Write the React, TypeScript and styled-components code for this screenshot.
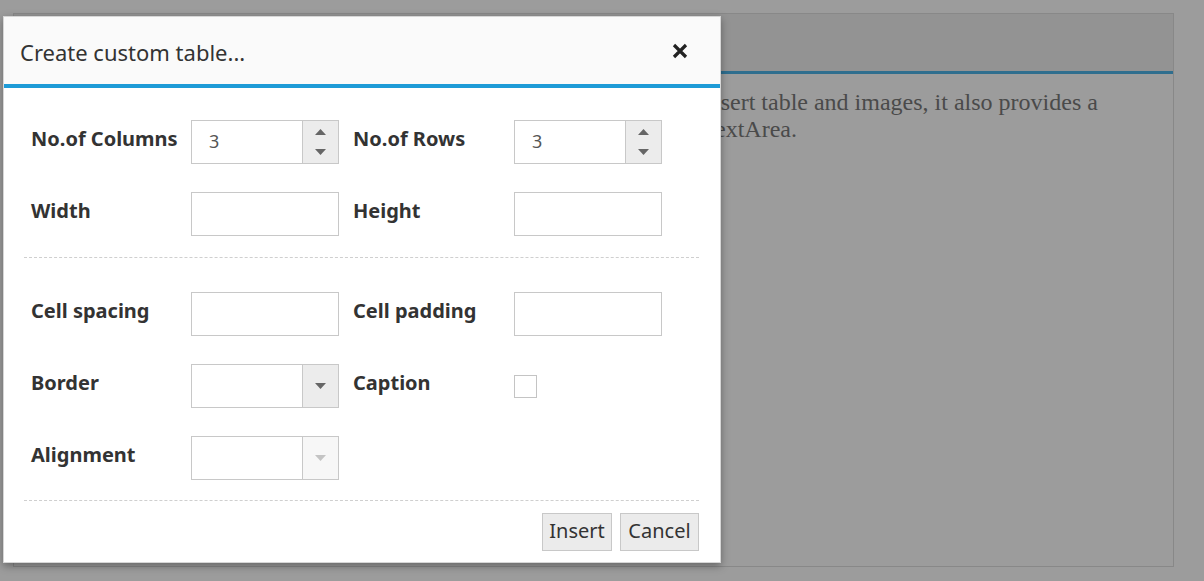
import React from 'react';
import styled, { createGlobalStyle } from 'styled-components';

const GlobalStyle = createGlobalStyle`
  html, body {
    margin: 0;
    padding: 0;
    background: #9c9c9c;
    font-family: "Segoe UI", "Noto Sans", "Open Sans", sans-serif;
  }
`;

const Page = styled.div`
  position: relative;
  width: 1204px;
  height: 581px;
  overflow: hidden;
  padding: 13px 30px 0 13px;
  box-sizing: border-box;
`;

const Editor = styled.div`
  height: 554px;
  border: 1px solid #888888;
  box-sizing: border-box;
  display: flex;
  flex-direction: column;
`;

const EditorToolbar = styled.div`
  height: 57px;
  background: #939393;
  border-bottom: 3px solid #2f6e8e;
`;

const EditorContent = styled.div`
  padding: 15px 0 0 688px;
  font-family: "Liberation Serif", serif;
  font-size: 24px;
  line-height: 27px;
  color: #4a4a4a;
`;

const Dialog = styled.div`
  position: absolute;
  left: 3px;
  top: 16px;
  width: 718px;
  height: 547px;
  box-sizing: border-box;
  background: #fff;
  border: 1px solid #d6d6d6;
  box-shadow: 0 3px 8px rgba(0, 0, 0, 0.35);
  display: flex;
  flex-direction: column;
`;

const DialogHeader = styled.div`
  height: 67px;
  background: #fafafa;
  border-bottom: 4px solid #1e9bd7;
  display: flex;
  align-items: center;
  justify-content: space-between;
  padding: 0 32px 0 16px;
`;

const Title = styled.div`
  font-size: 22px;
  color: #333;
  padding-top: 2px;
`;

const CloseButton = styled.button`
  border: none;
  background: none;
  padding: 0;
  width: 16px;
  height: 16px;
  display: flex;
  cursor: pointer;
`;

const Body = styled.div`
  padding: 32px 21px 0 20px;
`;

const FieldGrid = styled.div`
  display: grid;
  grid-template-columns: 160px 162px 161px 148px;
  grid-auto-rows: 44px;
  row-gap: 28px;
  align-items: center;
  padding-left: 7px;
`;

const Label = styled.label`
  font-size: 20px;
  font-weight: 700;
  color: #333;
  padding-bottom: 7px;
  white-space: nowrap;
`;

const Box = styled.div`
  width: 148px;
  height: 44px;
  box-sizing: border-box;
  border: 1px solid #c8c8c8;
  background: #fff;
  display: flex;
`;

const Value = styled.div`
  flex: 1;
  font-size: 18px;
  color: #555;
  padding-left: 17px;
  display: flex;
  align-items: center;
  padding-bottom: 3px;
`;

const SideButton = styled.div<{ $disabled?: boolean }>`
  width: 35px;
  border-left: 1px solid #c8c8c8;
  background: ${(p) => (p.$disabled ? '#f7f7f7' : '#ececec')};
  display: flex;
  flex-direction: column;
  align-items: center;
  justify-content: center;
  gap: 14px;
`;

const Checkbox = styled.div`
  width: 23px;
  height: 23px;
  box-sizing: border-box;
  border: 1px solid #c4c4c4;
  background: #fff;
`;

const Divider = styled.div<{ $top: number; $bottom: number }>`
  border-top: 1px dashed #cfcfcf;
  margin: ${(p) => p.$top}px 0 ${(p) => p.$bottom}px;
`;

const Footer = styled.div`
  display: flex;
  justify-content: flex-end;
  gap: 8px;
  padding: 0 21px 0 0;
`;

const Button = styled.button<{ $width: number }>`
  width: ${(p) => p.$width}px;
  height: 38px;
  box-sizing: border-box;
  border: 1px solid #c8c8c8;
  background: #ebebeb;
  color: #333;
  font-family: "Segoe UI", "Noto Sans", "Open Sans", sans-serif;
  font-size: 20px;
  padding: 0 0 3px;
  cursor: pointer;
`;

const Arrow = ({ up, color = '#666' }: { up?: boolean; color?: string }) => (
  <svg width="11" height="6" viewBox="0 0 11 6">
    <path d={up ? 'M0 6 L5.5 0 L11 6 Z' : 'M0 0 L11 0 L5.5 6 Z'} fill={color} />
  </svg>
);

const Spinner = ({ value }: { value: string }) => (
  <Box>
    <Value>{value}</Value>
    <SideButton>
      <Arrow up />
      <Arrow />
    </SideButton>
  </Box>
);

const Dropdown = ({ disabled }: { disabled?: boolean }) => (
  <Box>
    <Value />
    <SideButton $disabled={disabled}>
      <Arrow color={disabled ? '#c4c4c4' : '#666'} />
    </SideButton>
  </Box>
);

export default function App() {
  return (
    <Page>
      <GlobalStyle />
      <Editor>
        <EditorToolbar />
        <EditorContent>
          insert table and images, it also provides a<br />
          TextArea.
        </EditorContent>
      </Editor>

      <Dialog>
        <DialogHeader>
          <Title>Create custom table...</Title>
          <CloseButton aria-label="close">
            <svg width="16" height="16" viewBox="0 0 16 16">
              <path d="M2 2 L14 14 M14 2 L2 14" stroke="#222" strokeWidth="3.2" />
            </svg>
          </CloseButton>
        </DialogHeader>
        <Body>
          <FieldGrid>
            <Label>No.of Columns</Label>
            <Spinner value="3" />
            <Label>No.of Rows</Label>
            <Spinner value="3" />
            <Label>Width</Label>
            <Box />
            <Label>Height</Label>
            <Box />
          </FieldGrid>
          <Divider $top={21} $bottom={34} />
          <FieldGrid>
            <Label>Cell spacing</Label>
            <Box />
            <Label>Cell padding</Label>
            <Box />
            <Label>Border</Label>
            <Dropdown />
            <Label>Caption</Label>
            <Checkbox />
            <Label>Alignment</Label>
            <Dropdown disabled />
          </FieldGrid>
          <Divider $top={20} $bottom={12} />
        </Body>
        <Footer>
          <Button $width={70}>Insert</Button>
          <Button $width={79}>Cancel</Button>
        </Footer>
      </Dialog>
    </Page>
  );
}
